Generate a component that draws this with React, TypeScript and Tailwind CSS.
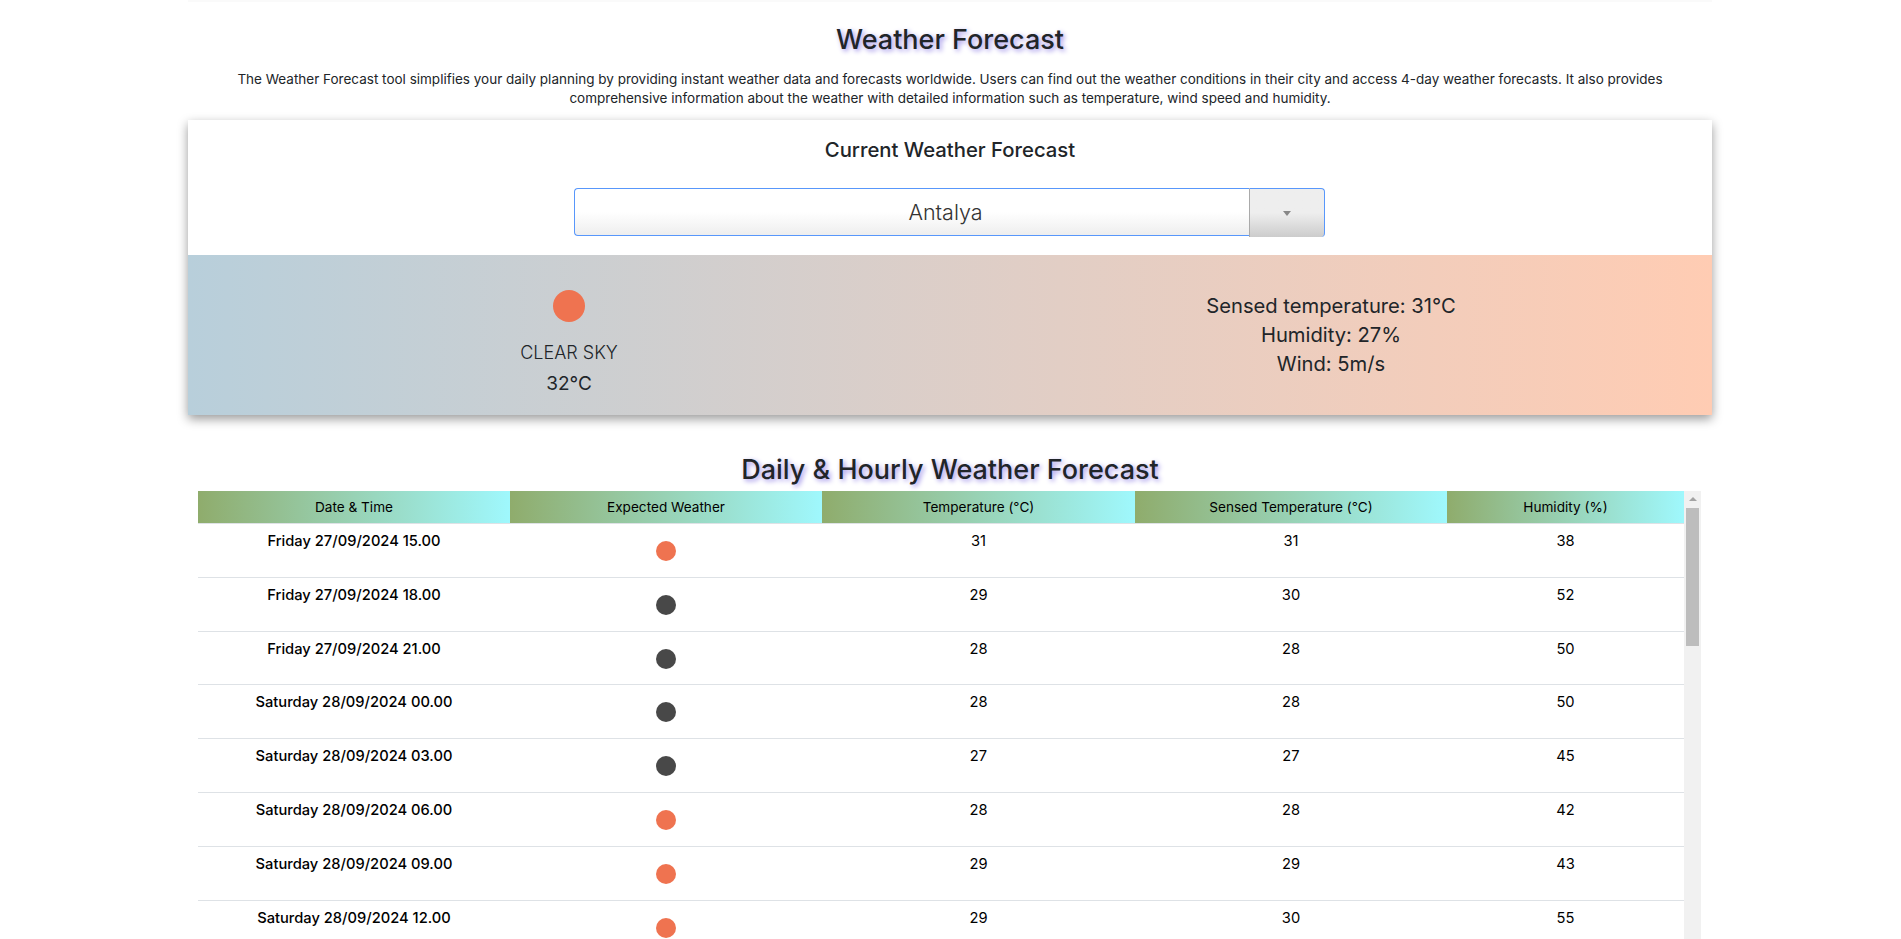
const sans = "font-['Inter',sans-serif]";

type Row = { date: string; night: boolean; temp: number; sensed: number; humidity: number };

const rows: Row[] = [
  { date: "Friday 27/09/2024 15.00", night: false, temp: 31, sensed: 31, humidity: 38 },
  { date: "Friday 27/09/2024 18.00", night: true, temp: 29, sensed: 30, humidity: 52 },
  { date: "Friday 27/09/2024 21.00", night: true, temp: 28, sensed: 28, humidity: 50 },
  { date: "Saturday 28/09/2024 00.00", night: true, temp: 28, sensed: 28, humidity: 50 },
  { date: "Saturday 28/09/2024 03.00", night: true, temp: 27, sensed: 27, humidity: 45 },
  { date: "Saturday 28/09/2024 06.00", night: false, temp: 28, sensed: 28, humidity: 42 },
  { date: "Saturday 28/09/2024 09.00", night: false, temp: 29, sensed: 29, humidity: 43 },
  { date: "Saturday 28/09/2024 12.00", night: false, temp: 29, sensed: 30, humidity: 55 },
];

const headers = ["Date & Time", "Expected Weather", "Temperature (°C)", "Sensed Temperature (°C)", "Humidity (%)"];

export default function App() {
  return (
    <div className={`${sans} h-screen overflow-hidden bg-white text-[#212529]`}>
      <div className="w-[1524px] ml-[188px] flex flex-col items-center">
        <div className="w-full h-[2px] bg-[#fafafa]" />
        <h1 className="mt-[21px] text-[27px] leading-[34px] font-medium text-center [text-shadow:2px_2px_5px_#9d8fe8]">
          Weather Forecast
        </h1>
        <p className="mt-[13px] w-[1440px] text-[13.5px] leading-[19px] text-center">
          The Weather Forecast tool simplifies your daily planning by providing instant weather data and forecasts
          worldwide. Users can find out the weather conditions in their city and access 4-day weather forecasts. It also
          provides comprehensive information about the weather with detailed information such as temperature, wind speed
          and humidity.
        </p>

        {/* Current weather */}
        <div className="mt-[12px] w-full shadow-[0_4px_10px_rgba(0,0,0,0.4)]">
          <div className="h-[135px] bg-white flex flex-col items-center">
            <h2 className="mt-[18px] text-[20.3px] leading-[24px] font-medium">Current Weather Forecast</h2>
            <div className="mt-[26px] mr-[1px] w-[751px] h-[49px] flex">
              <div className="flex-1 h-[48px] pl-[67px] flex items-center justify-center border border-r-0 border-[#5897fb] rounded-l-[4px] bg-gradient-to-b from-white from-50% to-[#eeeeee] text-[21.5px] font-light text-[#333]">
                Antalya
              </div>
              <div className="w-[76px] h-[49px] flex items-center justify-center border-l border-l-[#aaaaaa] border-r border-r-[#5897fb] border-t border-t-[#5897fb] rounded-r-[4px] bg-gradient-to-b from-[#eeeeee] from-50% to-[#cccccc]">
                <span className="w-0 h-0 border-x-[4px] border-x-transparent border-t-[5px] border-t-[#888888]" />
              </div>
            </div>
          </div>
          <div className="h-[160px] grid grid-cols-2 bg-gradient-to-r from-[#b8cfdb] to-[#ffccb3]">
            <div className="flex flex-col items-center pt-[35px]">
              <span className="w-[32px] h-[32px] rounded-full bg-[#ef7350]" />
              <div className="mt-[18px] text-[18px] leading-[26px] font-light">CLEAR SKY</div>
              <div className="mt-[5px] text-[19px] leading-[26px]">32°C</div>
            </div>
            <div className="flex flex-col items-center pt-[36px] text-[20.2px] leading-[29px]">
              <div>Sensed temperature: 31°C</div>
              <div>Humidity: 27%</div>
              <div>Wind: 5m/s</div>
            </div>
          </div>
        </div>

        <h2 className="mt-[37px] text-[27px] leading-[36px] font-medium text-center [text-shadow:2px_2px_5px_#9d8fe8]">
          Daily &amp; Hourly Weather Forecast
        </h2>

        {/* Forecast table with its scrollbar */}
        <div className="mt-[3px] mr-[1px] w-[1503px] flex">
          <div className="w-[1486px]">
            <div className="grid grid-cols-[312px_312px_313px_312px_237px] h-[33px] border-b border-[#dee2e6]">
              {headers.map((h) => (
                <div
                  key={h}
                  className="flex items-center justify-center text-[13.6px] bg-gradient-to-r from-[#8fac6c] to-[#9ff8fd] text-black"
                >
                  {h}
                </div>
              ))}
            </div>
            {rows.map((r) => (
              <div
                key={r.date}
                className="grid grid-cols-[312px_312px_313px_312px_237px] h-[53.8px] border-b border-[#dee2e6] text-[14.7px] text-black text-center"
              >
                <div className="pt-[7px] leading-[20px] font-medium">{r.date}</div>
                <div className="flex justify-center pt-[17px]">
                  <span className={`w-[20px] h-[20px] rounded-full ${r.night ? "bg-[#484848]" : "bg-[#ef7350]"}`} />
                </div>
                <div className="pt-[7px] leading-[20px]">{r.temp}</div>
                <div className="pt-[7px] leading-[20px]">{r.sensed}</div>
                <div className="pt-[7px] leading-[20px]">{r.humidity}</div>
              </div>
            ))}
          </div>
          <div className="w-[17px] bg-[#f1f1f1] flex flex-col items-center">
            <span className="mt-[6px] w-0 h-0 border-x-[4px] border-x-transparent border-b-[4px] border-b-[#a3a3a3]" />
            <span className="mt-[7px] w-[13px] h-[138px] bg-[#bdbdbd]" />
          </div>
        </div>
      </div>
    </div>
  );
}
